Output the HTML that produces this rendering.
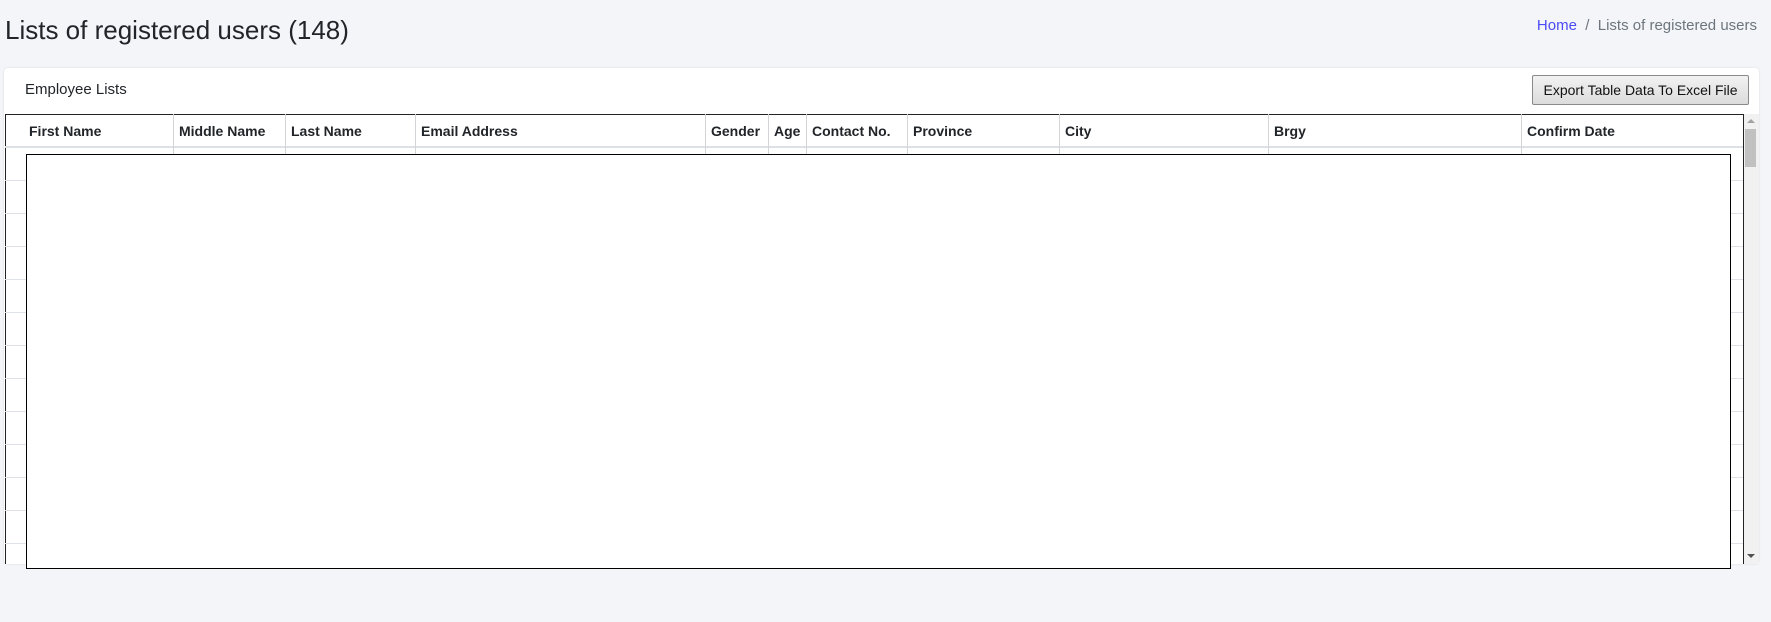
<!DOCTYPE html>
<html><head><style>
*{margin:0;padding:0;box-sizing:border-box}
body{width:1771px;height:622px;background:#f4f5f9;font-family:"Liberation Sans",sans-serif;position:relative;overflow:hidden;color:#212529}
.a{position:absolute}
.th{position:absolute;top:114px;height:33px;line-height:35px;font-weight:bold;font-size:14px;color:#212529;white-space:nowrap}
.vl{position:absolute;top:114px;width:1px;height:449px;background:#d4d4d8}
.hl{position:absolute;left:5px;width:1738px;height:1px;background:#dee2e6}
</style></head><body>
<div class="a" style="left:5px;top:15px;font-size:26px;color:#212529">Lists of registered users (148)</div>
<div class="a" style="right:14px;top:17px;font-size:15px;color:#6c757d"><span style="color:#4b4bf5">Home</span>&nbsp;&nbsp;/&nbsp;&nbsp;Lists of registered users</div>
<div class="a" style="left:4px;top:68px;width:1755px;height:496px;background:#fff;border-radius:4px;box-shadow:0 0 2px rgba(0,0,0,.12)"></div>
<div class="a" style="left:25px;top:81px;font-size:15px;color:#212529">Employee Lists</div>
<div class="a" style="left:1532px;top:75px;width:217px;height:30px;border:1px solid #8a8a8a;border-radius:2px;background:linear-gradient(#f2f2f2,#dcdcdc);font-size:14px;line-height:28px;text-align:center;color:#111">Export Table Data To Excel File</div>
<div class="a" style="left:5px;top:114px;width:1739px;height:450px;border:1px solid #222;border-bottom:none;background:#fff"></div>
<div class="hl" style="top:146px;height:2px;background:#dde0e4"></div>
<div class="hl" style="top:180px"></div><div class="hl" style="top:213px"></div><div class="hl" style="top:246px"></div><div class="hl" style="top:279px"></div><div class="hl" style="top:312px"></div><div class="hl" style="top:345px"></div><div class="hl" style="top:378px"></div><div class="hl" style="top:411px"></div><div class="hl" style="top:444px"></div><div class="hl" style="top:477px"></div><div class="hl" style="top:510px"></div><div class="hl" style="top:543px"></div>
<div class="vl" style="left:173px"></div><div class="vl" style="left:285px"></div><div class="vl" style="left:415px"></div><div class="vl" style="left:705px"></div><div class="vl" style="left:768px"></div><div class="vl" style="left:806px"></div><div class="vl" style="left:907px"></div><div class="vl" style="left:1059px"></div><div class="vl" style="left:1268px"></div><div class="vl" style="left:1521px"></div>
<div class="th" style="left:29px">First Name</div>
<div class="th" style="left:179px">Middle Name</div>
<div class="th" style="left:291px">Last Name</div>
<div class="th" style="left:421px">Email Address</div>
<div class="th" style="left:711px">Gender</div>
<div class="th" style="left:774px">Age</div>
<div class="th" style="left:812px">Contact No.</div>
<div class="th" style="left:913px">Province</div>
<div class="th" style="left:1065px">City</div>
<div class="th" style="left:1274px">Brgy</div>
<div class="th" style="left:1527px">Confirm Date</div>
<div class="a" style="left:1744px;top:114px;width:15px;height:450px;background:#f1f1f1"></div>
<div class="a" style="left:1745px;top:129px;width:11px;height:38px;background:#c1c1c1"></div>
<div class="a" style="left:1747px;top:119px;width:0;height:0;border-left:4px solid transparent;border-right:4px solid transparent;border-bottom:4px solid #a3a3a3"></div>
<div class="a" style="left:1747px;top:554px;width:0;height:0;border-left:4px solid transparent;border-right:4px solid transparent;border-top:4px solid #505050"></div>
<div class="a" style="left:26px;top:154px;width:1705px;height:415px;border:1.5px solid #000;background:#fff"></div>
</body></html>
